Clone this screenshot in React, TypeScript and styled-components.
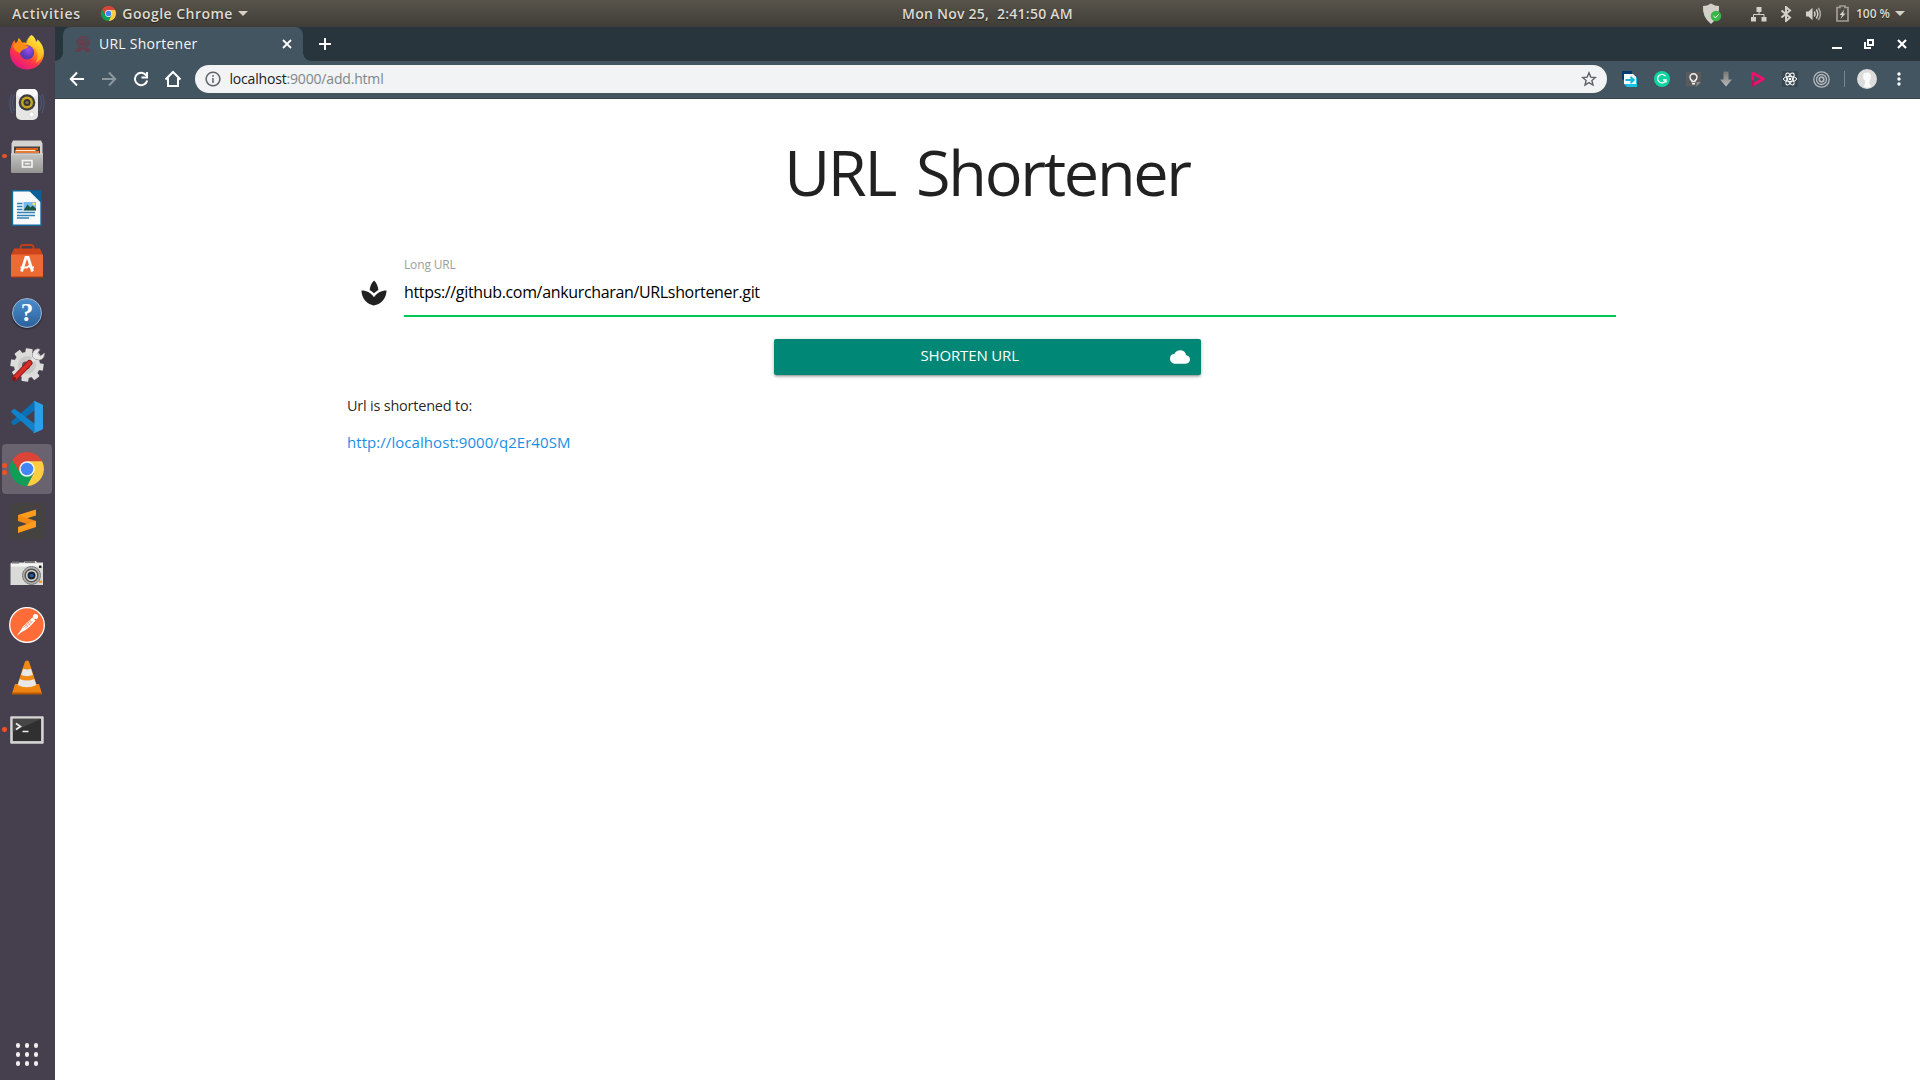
import React from 'react';
import styled, { createGlobalStyle } from 'styled-components';
import { MdSpa, MdCloud } from 'react-icons/md';

const GlobalStyle = createGlobalStyle`
  *, *::before, *::after { box-sizing: border-box; }
  html, body { margin: 0; padding: 0; overflow: hidden; background: #fff; }
  body { font-family: "Open Sans", "Noto Sans", sans-serif; }
  svg { display: block; flex: none; }
`;

const Desktop = styled.div`
  display: grid;
  grid-template: 27px 1053px / 55px 1865px;
  width: 1920px;
  height: 1080px;
`;

const TopBar = styled.header`
  grid-column: 1 / 3;
  display: grid;
  grid-template-columns: 902px 1fr auto;
  align-items: center;
  background: linear-gradient(#58544b, #3f3d37);
  color: #dfdbd2;
  font-size: 14px;
  font-weight: 600;
  line-height: 26px;
  text-shadow: 0 1px 1px rgba(0, 0, 0, 0.5);
  white-space: pre;
`;

const BarGroup = styled.div`
  display: flex;
  align-items: center;
  height: 27px;
  padding-left: 12px;
`;

const Tray = styled(BarGroup)`
  justify-content: flex-end;
  padding: 0 15px 0 0;
`;

const BarText = styled.span<{ $spacing?: number; $size?: number; $gap?: number }>`
  letter-spacing: ${p => p.$spacing ?? 0}px;
  font-size: ${p => p.$size ?? 14}px;
  margin-left: ${p => p.$gap ?? 0}px;
`;

const BarLogo = styled.span`
  margin-left: 20px;
`;

const Caret = styled.i<{ $gap: number }>`
  margin-left: ${p => p.$gap}px;
  border: 5px solid transparent;
  border-top-color: #d5d2ca;
  border-bottom: 0;
`;

const TraySlot = styled.span<{ $width: number }>`
  display: flex;
  justify-content: center;
  width: ${p => p.$width}px;
`;

const Dock = styled.nav`
  display: flex;
  flex-direction: column;
  justify-content: space-between;
  background: #463f4d;
`;

const DockList = styled.div`
  display: flex;
  flex-direction: column;
`;

const DockItem = styled.div<{ $active?: boolean }>`
  display: grid;
  grid-template-columns: 5px 40px 5px;
  align-items: center;
  justify-items: center;
  width: 50px;
  height: 50px;
  margin: 0 3px 2.14px 2px;
  border-radius: 4px;
  background: ${p => (p.$active ? '#69636f' : 'transparent')};
`;

const Marks = styled.span`
  display: flex;
  flex-direction: column;
  gap: 2.6px;
  width: 4.4px;
`;

const Mark = styled.i`
  width: 4.4px;
  height: 4.4px;
  border-radius: 50%;
  background: #e95420;
`;

const AppsButton = styled.div`
  display: grid;
  grid-template-columns: repeat(3, 4.6px);
  gap: 4.4px;
  padding: 0 0 14.5px 15.7px;
`;

const AppsDot = styled.i`
  height: 4.6px;
  border-radius: 50%;
  background: #f2f0f0;
`;

const Browser = styled.main`
  display: flex;
  flex-direction: column;
`;

const TabStrip = styled.div`
  display: flex;
  align-items: center;
  height: 34px;
  padding: 0 2px 0 8px;
  background: #29353d;
`;

const Tab = styled.div`
  position: relative;
  display: flex;
  align-items: center;
  width: 240px;
  height: 34px;
  padding: 0 10px 0 12px;
  border-radius: 8px 8px 0 0;
  background: #435560;
  color: #f4f6f7;
  font-size: 14px;
  letter-spacing: 0.25px;

  &::before, &::after {
    content: "";
    position: absolute;
    bottom: 0;
    width: 8px;
    height: 8px;
  }
  &::before { left: -8px; background: radial-gradient(circle at 0 0, transparent 7.5px, #435560 8px); }
  &::after { right: -8px; background: radial-gradient(circle at 100% 0, transparent 7.5px, #435560 8px); }
`;

const TabTitle = styled.span`
  flex: 1;
  margin-left: 8px;
  padding-bottom: 2px;
`;

const NewTab = styled.div`
  margin-left: 16px;
`;

const WindowButtons = styled.div`
  display: grid;
  grid-template-columns: repeat(3, 32.5px);
  justify-items: center;
  margin-left: auto;
`;

const Toolbar = styled.div`
  display: flex;
  align-items: center;
  height: 38px;
  padding: 0 5px 1px 6px;
  background: #435560;
  border-bottom: 1px solid #35444d;
`;

const Slot = styled.span`
  display: flex;
  align-items: center;
  justify-content: center;
  width: 32px;
`;

const Omnibox = styled.div`
  display: flex;
  align-items: center;
  width: 1412px;
  height: 28px;
  margin: 0 6.5px 0 6px;
  padding: 0 10px;
  border-radius: 14px;
  background: #f1f3f4;
  color: #202124;
  font-size: 14px;
  letter-spacing: -0.18px;
  line-height: 26px;
`;

const Address = styled.span`
  flex: 1;
  margin-left: 8.5px;
`;

const Path = styled.span`
  color: #80868b;
`;

const Divider = styled.i`
  width: 1px;
  height: 16px;
  margin: 0 6px;
  background: #778690;
`;

const Page = styled.section`
  flex: 1;
  width: 1280px;
  margin-left: 292px;
  color: rgba(0, 0, 0, 0.87);
`;

const Title = styled.h1`
  margin: 0;
  padding-top: 33px;
  font-size: 63px;
  font-weight: 400;
  letter-spacing: -2.3px;
  word-spacing: 7px;
  line-height: 80px;
  text-align: center;
`;

const Field = styled.div`
  display: grid;
  grid-template-columns: 45px 1212px;
  margin: 45px 0 0 12px;
`;

const FieldIcon = styled.span`
  padding-top: 21px;
  font-size: 30px;
  color: #212121;
`;

const FieldLabel = styled.label`
  display: block;
  height: 12px;
  color: #9e9e9e;
  font-size: 12px;
  letter-spacing: -0.15px;
  line-height: 16px;
`;

const UrlInput = styled.input`
  display: block;
  width: 100%;
  height: 48px;
  padding: 0 0 1px;
  border: 0;
  border-bottom: 2px solid #00c853;
  outline: 0;
  background: transparent;
  color: #000;
  font: 16px "Open Sans", "Noto Sans", sans-serif;
  letter-spacing: -0.34px;
`;

const SubmitButton = styled.button`
  display: flex;
  align-items: center;
  width: 427px;
  height: 36px;
  margin: 22px auto 0;
  padding: 0 11px 0 147px;
  border: 0;
  border-radius: 2px;
  background: #008775;
  box-shadow: 0 2px 2px 0 rgba(0, 0, 0, 0.14), 0 3px 1px -2px rgba(0, 0, 0, 0.12), 0 1px 5px 0 rgba(0, 0, 0, 0.2);
  color: #fff;
  font: 15px/30px "Open Sans", "Noto Sans", sans-serif;
  letter-spacing: -0.15px;
`;

const ButtonText = styled.span`
  flex: 1;
  padding-bottom: 5px;
  text-align: left;
`;

const Result = styled.p<{ $spacing: number; $size: number }>`
  margin: 0 0 14px;
  font-size: ${p => p.$size}px;
  letter-spacing: ${p => p.$spacing}px;
  line-height: 22.5px;
`;

const Results = styled.div`
  padding-top: 19.5px;
`;

const Link = styled.a`
  color: #188fe3;
  text-decoration: none;
`;

const ChromeLogo = ({ size }: { size: number }) => (
  <svg width={size} height={size} viewBox="0 0 48 48">
    <path d="M24 13H45.300A24 24 0 0 0 3.200 12L14.500 29.500Z" fill="#db4437" />
    <path d="M24 13H45.300A24 24 0 0 1 24 48L33.500 29.500Z" fill="#ffcd40" />
    <path d="M14.500 29.500 3.200 12A24 24 0 0 0 24 48L33.500 29.500Z" fill="#0f9d58" />
    <circle cx="24" cy="24" r="11" fill="#f5f5f5" />
    <circle cx="24" cy="24" r="8.800" fill="#4285f4" />
  </svg>
);

const Icon36: React.FC<{ children: React.ReactNode }> = ({ children }) => (
  <svg width="36" height="36" viewBox="0 0 36 36">{children}</svg>
);

const Firefox = () => (
  <Icon36>
    <defs>
      <linearGradient id="ffBody" x1=".8" y1=".1" x2=".25" y2=".95">
        <stop offset="0" stopColor="#fff44f" /><stop offset=".35" stopColor="#ff980e" />
        <stop offset=".65" stopColor="#ff3647" /><stop offset="1" stopColor="#e31587" />
      </linearGradient>
      <radialGradient id="ffGlobe" cx=".6" cy=".3"><stop offset="0" stopColor="#a14df0" /><stop offset="1" stopColor="#5b3bb5" /></radialGradient>
    </defs>
    <path d="M22.5 1c3 2 4.300 4.500 4.500 7 1-.5 1.500-1.400 1.600-2.400 4 3.600 6.400 8.400 6.400 13.400A17 16.500 0 0 1 1 19c0-5 1.500-9 4.500-13 .2 1.600.7 2.700 1.500 3.500C8.500 8 9 6 9.500 4c1.500 1 2.800 2.700 3.500 4.500 2 0 3.500 0 5 .5C18.500 5.500 20 3 22.500 1Z" fill="url(#ffBody)" />
    <path d="M22.500 1c3 2 4.300 4.500 4.500 7 1-.5 1.500-1.400 1.600-2.400 4.500 4.500 6.400 9.400 5.400 15-1 4-4 7-7.500 8.500 3-5 3-11-1-15-3-2.500-7-3-8.500-5.500C17.500 5.500 19.500 3 22.500 1Z" fill="#ffda30" opacity=".55" />
    <circle cx="18" cy="18.500" r="7.200" fill="url(#ffGlobe)" />
    <path d="M4 12c2-4 6-4.500 9-3.500 1.500 2 4 3.500 6.500 4-1 2-3.500 2.500-5 3-2 1-3 2-3.500 4-2-2-4.500-1-7-7.500Z" fill="#ff8a16" />
  </Icon36>
);

const Rhythmbox = () => (
  <Icon36>
    <g fill="none" stroke="#4c6690" strokeWidth="1" opacity=".75">
      <path d="M5.500 9Q1.500 17 5.500 25M3 8Q-1.500 17 3 27M30.500 9Q34.500 17 30.500 25M33 8Q37.500 17 33 27" />
    </g>
    <rect x="7" y="3" width="22" height="31" rx="5" fill="#e6e6e4" />
    <rect x="8" y="3" width="20" height="8" rx="4" fill="#fafafa" />
    <circle cx="18" cy="16.500" r="8.300" fill="#3d3d40" />
    <circle cx="18" cy="16.500" r="6" fill="#c6a51c" />
    <circle cx="18" cy="16.500" r="3.500" fill="#393634" />
    <circle cx="18" cy="16.500" r="1.600" fill="#77715e" />
    <circle cx="22.500" cy="28.500" r="2.500" fill="#fff" stroke="#c7c7c7" strokeWidth=".6" />
  </Icon36>
);

const Files = () => (
  <Icon36>
    <defs><linearGradient id="cab" x2="0" y2="1"><stop stopColor="#c4c4c2" /><stop offset="1" stopColor="#949492" /></linearGradient></defs>
    <path d="M4 2.500h28l1.500 3v12h-31v-12Z" fill="#d4d3cf" />
    <path d="M5 8.500h26v8H5Z" fill="#45423f" />
    <path d="M7 10h22v2H7Z" fill="#d7621e" /><path d="M6.500 12h20v1h-20Z" fill="#f9ecd8" /><path d="M6 13h24v2H6Z" fill="#e57a35" />
    <path d="M2 15.500h32V34a1 1 0 0 1-1 1H3a1 1 0 0 1-1-1Z" fill="url(#cab)" />
    <path d="M2 16h32" stroke="#d8d8d6" />
    <rect x="13.500" y="22.500" width="9.500" height="6.500" fill="none" stroke="#f5f5f5" strokeWidth="1.600" />
    <path d="M16 25h4.500v1.500H16Z" fill="#eee" />
  </Icon36>
);

const Writer = () => (
  <Icon36>
    <path d="M3.500.7h18L32 11.500V35.300H3.500Z" fill="#fafafa" stroke="#126a9d" strokeWidth="1.400" />
    <path d="M19.500.3H32.500V13Z" fill="#0d5f97" />
    <g stroke="#3182b7" strokeWidth="1.400"><path d="M8 13.500h5.500M8 16.500h5.500M8 19.500h5.500M8 22.500h18M8 25.500h18M8 28h12" /></g>
    <rect x="14.500" y="12" width="12.500" height="8.500" fill="#77b9ec" />
    <path d="m14.500 20.500 4-6 3 3 2-2 3.500 3v2Z" fill="#1c573f" /><circle cx="24.800" cy="14" r="1.400" fill="#ffe25f" />
  </Icon36>
);

const Software = () => (
  <Icon36>
    <path d="M11.500 9V4.500q0-2.500 2.500-2.500h8q2.500 0 2.500 2.500V9" fill="none" stroke="#c23c16" strokeWidth="1.800" />
    <path d="M5 5.500h26l3 7H2Z" fill="#ce451c" />
    <path d="M2 11.500h32V34H2Z" fill="#ee6a34" />
    <path d="M2 33.500h32v1.200H2Z" fill="#a23a16" />
    <path d="m12.500 28.500 4.400-14h2.200l4.400 14" fill="none" stroke="#fff" strokeWidth="2.800" />
    <path d="M11.500 24.500h6.500l2-1.500 2 1.500h3" fill="none" stroke="#fff" strokeWidth="2" />
  </Icon36>
);

const HelpGlyph = styled.span`
  display: flex;
  align-items: center;
  justify-content: center;
  width: 30px;
  height: 30px;
  border: 1px solid #9db8d6;
  border-radius: 50%;
  background: linear-gradient(#4b8dca, #2c629c);
  box-shadow: 0 1px 2px rgba(0, 0, 0, 0.5);
  color: #fff;
  font: 700 25px/28px "Liberation Serif", serif;
`;

const Settings = () => (
  <Icon36>
    <g fill="#dcdcda">
      {[0, 45, 90, 135].map(a => <rect key={a} x="14.500" y="1.500" width="7" height="33" rx="1" transform={`rotate(${a + 8} 18 18)`} />)}
      <circle cx="18" cy="18" r="13" />
    </g>
    <circle cx="18" cy="18" r="9" fill="#c9c9c7" /><circle cx="17" cy="18.500" r="4" fill="#5b5660" />
    <path d="m19 18.500 8-9" stroke="#e2e2e0" strokeWidth="4" />
    <path d="M25 3.500q4-3 6-1l-2.500 4 3 2.500 4-3q0 6-5 7-5 0-7-3-.5-4 1.500-6.500Z" fill="#e9e9e7" stroke="#949491" strokeWidth=".7" />
    <path d="M6 31 20.500 16" stroke="#8f1212" strokeWidth="6" strokeLinecap="round" />
    <path d="M6 31 20.500 16" stroke="#d62e2b" strokeWidth="4.200" strokeLinecap="round" />
    <circle cx="5.500" cy="31.500" r="1.300" fill="#631111" />
  </Icon36>
);

const VsCode = () => (
  <Icon36>
    <path d="M25.500 2 2.500 22.500q-.8 1 0 1.700l1.700 1.500q1 .7 2 0L26 11Z" fill="#0a6fb3" />
    <path d="M25.500 34 2.500 13.500q-.8-1 0-1.700l1.700-1.500q1-.7 2 0L26 25Z" fill="#1182c9" />
    <path d="M25.500 2 33 5.300q1 .5 1 1.700v22q0 1.200-1 1.700L25.500 34q-1 .2-1.500-.5 1.500.5 1.500-1.500V4q0-2-1.500-1.500.5-.7 1.500-.5Z" fill="#2c9fe8" />
  </Icon36>
);

const Sublime = () => (
  <Icon36>
    <rect width="36" height="36" rx="3" fill="#444341" />
    <path d="M9 12 27 6.500v6L9 18Z" fill="#ff9c1c" />
    <path d="M9 12v6l18 6v-6Z" fill="#f38a17" />
    <path d="M9 24 27 18v6L9 30Z" fill="#ff9c1c" />
  </Icon36>
);

const Camera = () => (
  <Icon36>
    <path d="M3 7.500h12L16 6h11l1 1.500h6V30H1.500V8.500Z" fill="#dadad8" /><path d="M2 8.500h32v3H2Z" fill="#f4f4f2" />
    <path d="M3 6.500h7v2H3ZM16 6h10v2H16Z" fill="#777" />
    <rect x="30" y="10.500" width="2.500" height="2.500" fill="#222" /><rect x="30" y="25.500" width="3" height="2.500" fill="#e99a33" />
    <circle cx="22.500" cy="20.500" r="9" fill="#b3b3b1" stroke="#777" /><circle cx="22.500" cy="20.500" r="6.300" fill="#dededc" stroke="#555" strokeWidth="1.500" />
    <circle cx="22.500" cy="20.500" r="4" fill="#20242d" /><rect x="20.500" y="19" width="4" height="3" rx="1" fill="#245ba8" />
  </Icon36>
);

const Postman = () => (
  <Icon36>
    <circle cx="18" cy="18" r="17.300" fill="#ff6c37" stroke="#fff" strokeWidth="1.300" />
    <circle cx="26.500" cy="9.500" r="2.600" fill="#fff" />
    <path d="m23.500 10.500 3 3-5.500 6-4.500 3.500-4.500 2.500-4.500 3.500 4-5.500 2.500-4 4-4Z" fill="#fff" />
    <path d="m21.500 13-7 7.500m9-6.500-7.500 7.500m3.500-10 3 4m-5-2 3 4m-5-2 3 4" stroke="#ff6c37" strokeWidth=".6" />
  </Icon36>
);

const Vlc = () => (
  <Icon36>
    <path d="M6 24h24l3 9.500H3Z" fill="#ed8313" /><path d="M3 32.500h30v2H3Z" fill="#b95a04" />
    <path d="M16 1.500q2-1.800 4 0L28 26q-10 6-20 0Z" fill="#ef8a15" />
    <path d="m14 8.800-1.900 6.200q5.900 2.300 11.800 0L22 8.800q-4 1.600-8 0ZM10.700 19l-2 6q9.300 4.600 18.600 0l-2-6q-7.300 3.200-14.600 0Z" fill="#e8e8e6" />
  </Icon36>
);

const Terminal = () => (
  <Icon36>
    <rect x="1.200" y="4.200" width="33.500" height="27.500" rx="1" fill="#d5d5d3" />
    <rect x="3.800" y="6.800" width="28.300" height="22.300" fill="#2f302f" />
    <path d="M3.800 6.800h28.300L3.800 20Z" fill="#454645" />
    <path d="m7 11.500 4.500 3L7 17.500M13.500 19.500h6" fill="none" stroke="#eee" strokeWidth="1.600" />
  </Icon36>
);

const dockApps: { name: string; icon: React.ReactNode; marks?: number; active?: boolean }[] = [
  { name: 'firefox', icon: <Firefox /> },
  { name: 'rhythmbox', icon: <Rhythmbox /> },
  { name: 'files', icon: <Files />, marks: 1 },
  { name: 'writer', icon: <Writer /> },
  { name: 'software', icon: <Software /> },
  { name: 'help', icon: <HelpGlyph>?</HelpGlyph> },
  { name: 'settings', icon: <Settings /> },
  { name: 'vscode', icon: <VsCode /> },
  { name: 'chrome', icon: <ChromeLogo size={34} />, marks: 2, active: true },
  { name: 'sublime', icon: <Sublime /> },
  { name: 'camera', icon: <Camera /> },
  { name: 'postman', icon: <Postman /> },
  { name: 'vlc', icon: <Vlc /> },
  { name: 'terminal', icon: <Terminal />, marks: 1 },
];

const Line: React.FC<{ size: number; color?: string; width?: number; d: string }> = ({ size, color = '#fff', width = 2, d }) => (
  <svg width={size} height={size} viewBox={`0 0 ${size} ${size}`} fill="none" stroke={color} strokeWidth={width}><path d={d} /></svg>
);

const Favicon = () => (
  <svg width="16" height="16" viewBox="0 0 16 16" fill="none" stroke="#693c49">
    <circle cx="8" cy="6.500" r="5.500" strokeWidth="2.200" strokeDasharray="2.400 .6" /><circle cx="8" cy="6.500" r="3" strokeWidth="1.200" />
    <path d="M8 3.500v4M5.500 8h5M2 12.800h12M.5 14.800h5.500m4 0h5.500" strokeWidth="1.800" />
  </svg>
);

const Shield = () => (
  <svg width="20" height="22" viewBox="0 0 20 22">
    <path d="M9 .5q4 2.500 8 2.500 1 11-8 18Q0 14 1 3q4 0 8-2.500Z" fill="#d3d0c9" />
    <circle cx="14" cy="13" r="5.300" fill="#39b54a" /><path d="m11.500 13 2 1.800 3-3.300" fill="none" stroke="#fff" strokeWidth="1" />
  </svg>
);

const Network = () => (
  <svg width="16" height="16" viewBox="0 0 16 16" fill="#d3d0c9">
    <path d="M5.500 1h5v5h-5ZM0 11h5v4.500H0ZM10.500 11h5v4.500h-5Z" /><path d="M8 6v2.500M2.500 11V8.500H13V11" fill="none" stroke="#d3d0c9" />
  </svg>
);

const Bluetooth = () => <Line size={16} color="#d3d0c9" width={2} d="M3.500 4.500l8.500 7L8 15V1l4 3.500-8.500 7" />;

const Volume = () => (
  <svg width="16" height="16" viewBox="0 0 16 16" fill="none" stroke="#d3d0c9" strokeWidth="1.500">
    <path d="M0 5.500h2.500L6.500 1.800v12.400L2.500 10.500H0Z" fill="#d3d0c9" stroke="none" />
    <path d="M8.300 5.500q1.600 2.500 0 5M10.300 3.500q3 4.500 0 9" /><path d="M12.300 2q4.200 6 0 12" opacity=".7" />
  </svg>
);

const Battery = () => (
  <svg width="13" height="17" viewBox="0 0 13 17">
    <path d="M4 1h5v1.500h3V16H1V2.500h3Z" fill="none" stroke="#a19e97" strokeWidth="1.700" /><path d="m8.500 4.500-5 5.500H6l-1.500 4 5-5.500H7Z" fill="#d8d5ce" />
  </svg>
);

const Bookmarks = () => (
  <svg width="16" height="16" viewBox="0 0 16 16">
    <path d="M0 0h10v4H4v7L0 8Z" fill="#003a70" /><path d="M2 3h9l4 4v9H5l-3-3Z" fill="#18c3e6" />
    <path d="M2 3h9l3 3v7H2Z" fill="#f4fbfd" />
    <path d="M3.500 9h8M8.500 6l3.200 3-3.200 3" fill="none" stroke="#12b5dd" strokeWidth="2" />
  </svg>
);

const Grammarly = () => (
  <svg width="16" height="16" viewBox="0 0 16 16">
    <circle cx="8" cy="8" r="8" fill="#11d3a1" />
    <path d="M11.500 5.200A4.300 4.300 0 1 0 12 9H9M12 8.500V11.500" fill="none" stroke="#fff" strokeWidth="1.300" />
  </svg>
);

const Bulb = () => (
  <svg width="16" height="16" viewBox="0 0 16 16">
    <path d="M0 1h15v10l-4.500 4.500H0Z" fill="#5a5a5a" /><path d="m15 11-4.500 4.500V11Z" fill="#8c8c8c" />
    <path d="M6 9.500q-2-1-2-3.200a3.500 3.500 0 0 1 7 0q0 2.200-2 3.200v1H6ZM6 12.800h3" fill="none" stroke="#f4f4f4" strokeWidth="1.400" />
  </svg>
);

const Down = () => (
  <svg width="14" height="16" viewBox="0 0 14 16">
    <defs><linearGradient id="dn" x2="0" y2="1"><stop stopColor="#777" /><stop offset="1" stopColor="#bbb" /></linearGradient></defs>
    <path d="M4.500.500h5v8H13L7 15.500 1 8.500h3.500Z" fill="url(#dn)" />
  </svg>
);

const Play = () => (
  <svg width="16" height="16" viewBox="0 0 16 16">
    <path d="M2.700 2v12L13.500 8Z" fill="none" stroke="#f20f6c" strokeWidth="2.600" strokeLinejoin="round" />
    <path d="M1.400 9v5.500q1 1.500 2.600.5V9Z" fill="#b5145a" />
  </svg>
);

const ReactMark = () => (
  <svg width="16" height="16" viewBox="0 0 16 16">
    <rect width="16" height="16" fill="#384751" />
    <g fill="none" stroke="#fff" strokeWidth="1">{[0, 60, 120].map(a => <ellipse key={a} cx="8" cy="8" rx="6.600" ry="2.600" transform={`rotate(${a} 8 8)`} />)}</g>
    <circle cx="8" cy="8" r="1.300" fill="#fff" />
  </svg>
);

const Rings = () => (
  <svg width="17" height="17" viewBox="0 0 17 17" fill="none" stroke="#b5b8ba">
    <circle cx="8.500" cy="8.500" r="7.700" strokeWidth="1.300" /><circle cx="8.500" cy="8.500" r="5" strokeWidth="1.300" /><circle cx="8.500" cy="8.500" r="2.300" strokeWidth="1.700" />
  </svg>
);

const Avatar = () => (
  <svg width="20" height="20" viewBox="0 0 20 20">
    <circle cx="10" cy="10" r="10" fill="#dcdcdc" />
    <path d="M6 7.500q0-4 4-4t4 4q0 3-1.500 4.500v2l1.500 3.500q-4 2.500-7 0l1-3.500v-2Q6 10 6 7.500Z" fill="#fafafa" />
  </svg>
);

const extensions = [Bookmarks, Grammarly, Bulb, Down, Play, ReactMark, Rings];

export default function App() {
  return (
    <>
      <GlobalStyle />
      <Desktop>
        <TopBar>
          <BarGroup>
            <BarText $spacing={0.75}>Activities</BarText>
            <BarLogo><ChromeLogo size={15} /></BarLogo>
            <BarText $spacing={0.47} $gap={6.5}>Google Chrome</BarText>
            <Caret $gap={5.5} />
          </BarGroup>
          <BarText $spacing={0.25}>{'Mon Nov 25,  2:41:50 AM'}</BarText>
          <Tray>
            <TraySlot $width={67}><Shield /></TraySlot>
            <TraySlot $width={27.6}><Network /></TraySlot>
            <TraySlot $width={27}><Bluetooth /></TraySlot>
            <TraySlot $width={29}><Volume /></TraySlot>
            <TraySlot $width={27}><Battery /></TraySlot>
            <BarText $size={12}>100 %</BarText>
            <Caret $gap={5} />
          </Tray>
        </TopBar>

        <Dock>
          <DockList>
            {dockApps.map(app => (
              <DockItem key={app.name} $active={app.active}>
                <Marks>{Array.from({ length: app.marks ?? 0 }, (_, i) => <Mark key={i} />)}</Marks>
                {app.icon}
              </DockItem>
            ))}
          </DockList>
          <AppsButton>{Array.from({ length: 9 }, (_, i) => <AppsDot key={i} />)}</AppsButton>
        </Dock>

        <Browser>
          <TabStrip>
            <Tab>
              <Favicon />
              <TabTitle>URL Shortener</TabTitle>
              <Line size={12} d="M2 2l8 8M10 2l-8 8" width={1.800} />
            </Tab>
            <NewTab><Line size={12} d="M6 0v12M0 6h12" /></NewTab>
            <WindowButtons>
              <Line size={12} d="M1 10h10" />
              <Line size={12} d="M5 2h5v5H5zM2 4v6h6" />
              <Line size={12} d="M2 2l8 8M10 2l-8 8" width={2.200} />
            </WindowButtons>
          </TabStrip>
          <Toolbar>
            <Slot><Line size={16} d="M15 8H2M8 1.500L1.800 8 8 14.500" /></Slot>
            <Slot><Line size={16} color="#8c979e" d="M1 8h13M8 1.500L14.200 8 8 14.500" /></Slot>
            <Slot><Line size={16} d="M13.300 4.500A6.200 6.200 0 1 0 14.200 9.500M14 1v5.500H8.500" /></Slot>
            <Slot><Line size={18} d="M1.500 9.500L9 2l7.500 7.500M4 8v8h10V8" /></Slot>
            <Omnibox>
              <Line size={16} color="#5f6368" width={1.500} d="M8 1.200a6.800 6.800 0 1 0 .01 0M8 7v5M8 4v1.700" />
              <Address>localhost<Path>:9000/add.html</Path></Address>
              <Line size={16} color="#5f6368" width={1.400} d="M8 1.800l1.800 4.300 4.600.4-3.500 3 1.100 4.500L8 11.600 4 14l1.100-4.500-3.500-3 4.600-.4z" />
            </Omnibox>
            {extensions.map((Extension, i) => <Slot key={i}><Extension /></Slot>)}
            <Divider />
            <Slot><Avatar /></Slot>
            <Slot>
              <svg width="4" height="14" viewBox="0 0 4 14" fill="#fff"><circle cx="2" cy="2" r="1.700" /><circle cx="2" cy="7" r="1.700" /><circle cx="2" cy="12" r="1.700" /></svg>
            </Slot>
          </Toolbar>

          <Page>
            <Title>URL Shortener</Title>
            <Field>
              <FieldIcon><MdSpa /></FieldIcon>
              <div>
                <FieldLabel>Long URL</FieldLabel>
                <UrlInput defaultValue="https://github.com/ankurcharan/URLshortener.git" spellCheck={false} />
              </div>
            </Field>
            <SubmitButton>
              <ButtonText>SHORTEN URL</ButtonText>
              <MdCloud size={20} />
            </SubmitButton>
            <Results>
              <Result $size={14.5} $spacing={-0.22}>Url is shortened to:</Result>
              <Result $size={15} $spacing={0.06}><Link href="#">http://localhost:9000/q2Er40SM</Link></Result>
            </Results>
          </Page>
        </Browser>
      </Desktop>
    </>
  );
}
